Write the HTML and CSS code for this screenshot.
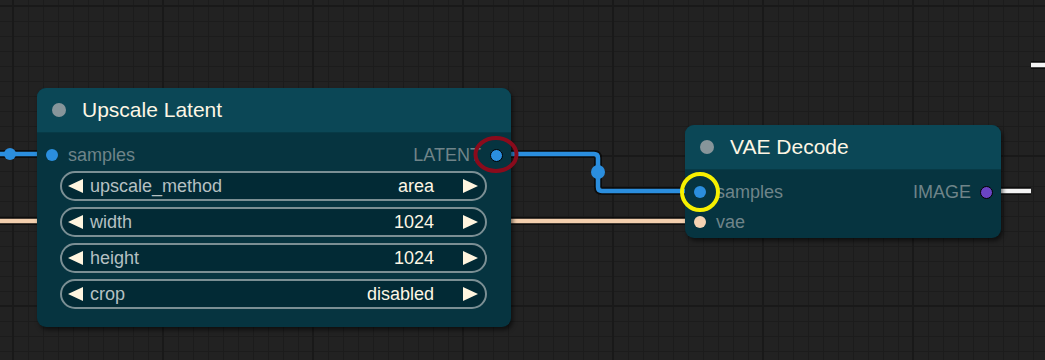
FILE: index.html
```html
<!DOCTYPE html>
<html>

<head>
    <title>Node Graph</title>
    <link rel="stylesheet" href="styles.css">
</head>

<body>
    <div class="canvas">
        <!-- links between nodes, drawn under the nodes -->
        <svg class="links" width="1045" height="360" viewBox="0 0 1045 360">
            <g class="link-shadow">
                <path d="M0 154 H51" />
                <path d="M0 221 H700" />
                <path d="M496 154 H594 Q598 154 598 158 V187 Q598 191 602 191 H700" />
                <path d="M986 191 H1031" />
                <path d="M1031 65 H1045" />
            </g>
            <path class="link link-latent" d="M0 154 H51" />
            <path class="link link-vae" d="M0 221 H700" />
            <path class="link link-latent" d="M496 154 H594 Q598 154 598 158 V187 Q598 191 602 191 H700" />
            <path class="link link-image" d="M986 191 H1031" />
            <path class="link link-image" d="M1031 65 H1045" />
            <circle class="link-mid" cx="10" cy="154" r="6" />
            <circle class="link-mid" cx="598" cy="172" r="7" />
        </svg>

        <div class="node node-upscale">
            <div class="node-title"><span class="title-dot"></span>Upscale Latent</div>
            <div class="node-body">
                <div class="slot-row">
                    <div class="slot-in"><span class="dot dot-latent"></span>samples</div>
                    <div class="slot-out">LATENT<span class="dot dot-latent dot-out"></span></div>
                </div>
                <div class="widgets">
                    <div class="widget">
                        <span class="arrow arrow-left"></span>
                        <span class="w-label">upscale_method</span>
                        <span class="w-value">area</span>
                        <span class="arrow arrow-right"></span>
                    </div>
                    <div class="widget">
                        <span class="arrow arrow-left"></span>
                        <span class="w-label">width</span>
                        <span class="w-value">1024</span>
                        <span class="arrow arrow-right"></span>
                    </div>
                    <div class="widget">
                        <span class="arrow arrow-left"></span>
                        <span class="w-label">height</span>
                        <span class="w-value">1024</span>
                        <span class="arrow arrow-right"></span>
                    </div>
                    <div class="widget">
                        <span class="arrow arrow-left"></span>
                        <span class="w-label">crop</span>
                        <span class="w-value">disabled</span>
                        <span class="arrow arrow-right"></span>
                    </div>
                </div>
            </div>
        </div>

        <div class="node node-vae">
            <div class="node-title"><span class="title-dot"></span>VAE Decode</div>
            <div class="node-body">
                <div class="slot-row">
                    <div class="slot-in"><span class="dot dot-latent"></span>samples</div>
                    <div class="slot-out">IMAGE<span class="dot dot-image dot-out"></span></div>
                </div>
                <div class="slot-row">
                    <div class="slot-in"><span class="dot dot-vae"></span>vae</div>
                </div>
            </div>
        </div>

        <!-- highlight rings drawn over the slots -->
        <svg class="marks" width="1045" height="360" viewBox="0 0 1045 360">
            <ellipse class="mark-red" cx="496" cy="154.5" rx="20.5" ry="16.5" />
            <circle class="mark-yellow" cx="700" cy="192" r="18" />
        </svg>
    </div>
</body>

</html>
```

FILE: styles.css
```css
body {
    margin: 0;
    background: #222;
    font-family: "Liberation Sans", Arial, sans-serif;
}

.canvas {
    position: relative;
    width: 1045px;
    height: 360px;
    overflow: hidden;
    background-color: #222;
    background-image:
        linear-gradient(90deg, #191919 2px, transparent 2px),
        linear-gradient(#191919 2px, transparent 2px),
        linear-gradient(90deg, #1c1c1c 1px, transparent 1px),
        linear-gradient(#1c1c1c 1px, transparent 1px);
    background-size: 150px 150px, 150px 150px, 15px 15px, 15px 15px;
    background-position: 12px 0, 0 155px, 13px 0, 0 6px;
}

.links,
.marks {
    position: absolute;
    left: 0;
    top: 0;
}

.marks {
    z-index: 2;
}

.link-shadow path {
    fill: none;
    stroke: #000;
    stroke-opacity: 0.6;
    stroke-width: 8;
}

.link {
    fill: none;
    stroke-width: 4.5;
}

.link-latent {
    stroke: #2b8ede;
}

.link-vae {
    stroke: #f3cfae;
}

.link-image {
    stroke: #f4f4f4;
}

.link-mid {
    fill: #2b8ede;
}

.mark-red {
    fill: none;
    stroke: #8a0b1c;
    stroke-width: 4;
}

.mark-yellow {
    fill: none;
    stroke: #f6f000;
    stroke-width: 4;
}

/* nodes */
.node {
    position: absolute;
    z-index: 1;
    display: flex;
    flex-direction: column;
    border-radius: 9px;
    background-color: #063440;
    box-shadow: 2px 3px 4px rgba(0, 0, 0, 0.55);
    overflow: hidden;
}

.node-upscale {
    left: 37px;
    top: 88px;
    width: 474px;
    height: 239px;
}

.node-vae {
    left: 685px;
    top: 125px;
    width: 316px;
    height: 113px;
}

.node-title {
    display: flex;
    align-items: center;
    gap: 16px;
    height: 44px;
    padding-left: 15px;
    background-color: #0b4756;
    border-bottom: 1px solid #073a46;
    color: #fdf6e4;
    font-size: 21px;
}

.title-dot {
    width: 14px;
    height: 14px;
    border-radius: 50%;
    background-color: #87959a;
}

.node-body {
    display: flex;
    flex-direction: column;
    padding-top: 7px;
}

.slot-row {
    display: flex;
    justify-content: space-between;
    align-items: center;
    height: 30px;
    color: #6f8489;
    font-size: 18px;
}

.slot-in {
    display: flex;
    align-items: center;
    gap: 10px;
    padding-left: 9px;
}

.slot-out {
    display: flex;
    align-items: center;
    gap: 9px;
    padding-right: 8px;
}

.dot {
    width: 12px;
    height: 12px;
    border-radius: 50%;
}

.dot-out {
    width: 11px;
    height: 11px;
    border: 1.5px solid #000;
}

.dot-latent {
    background-color: #2b8ede;
}

.dot-vae {
    background-color: #f6d2b2;
}

.dot-image {
    background-color: #6a44c4;
}

/* combo / number widgets */
.widgets {
    display: flex;
    flex-direction: column;
    gap: 6px;
    margin: 1px 24px 0 23px;
}

.widget {
    display: flex;
    align-items: center;
    height: 26px;
    padding: 0 9px 0 8px;
    border: 2px solid #7b8f94;
    border-radius: 16px;
    background-color: #022a35;
    font-size: 18px;
}

.arrow {
    width: 0;
    height: 0;
    border-top: 7px solid transparent;
    border-bottom: 7px solid transparent;
}

.arrow-left {
    border-right: 15px solid #fff5df;
    margin-left: -2px;
}

.arrow-right {
    border-left: 15px solid #fff5df;
    margin-right: -2px;
}

.w-label {
    flex: 1;
    margin-left: 7px;
    color: #b5c0c2;
}

.w-value {
    margin-right: 29px;
    color: #fdf6e4;
}
```
